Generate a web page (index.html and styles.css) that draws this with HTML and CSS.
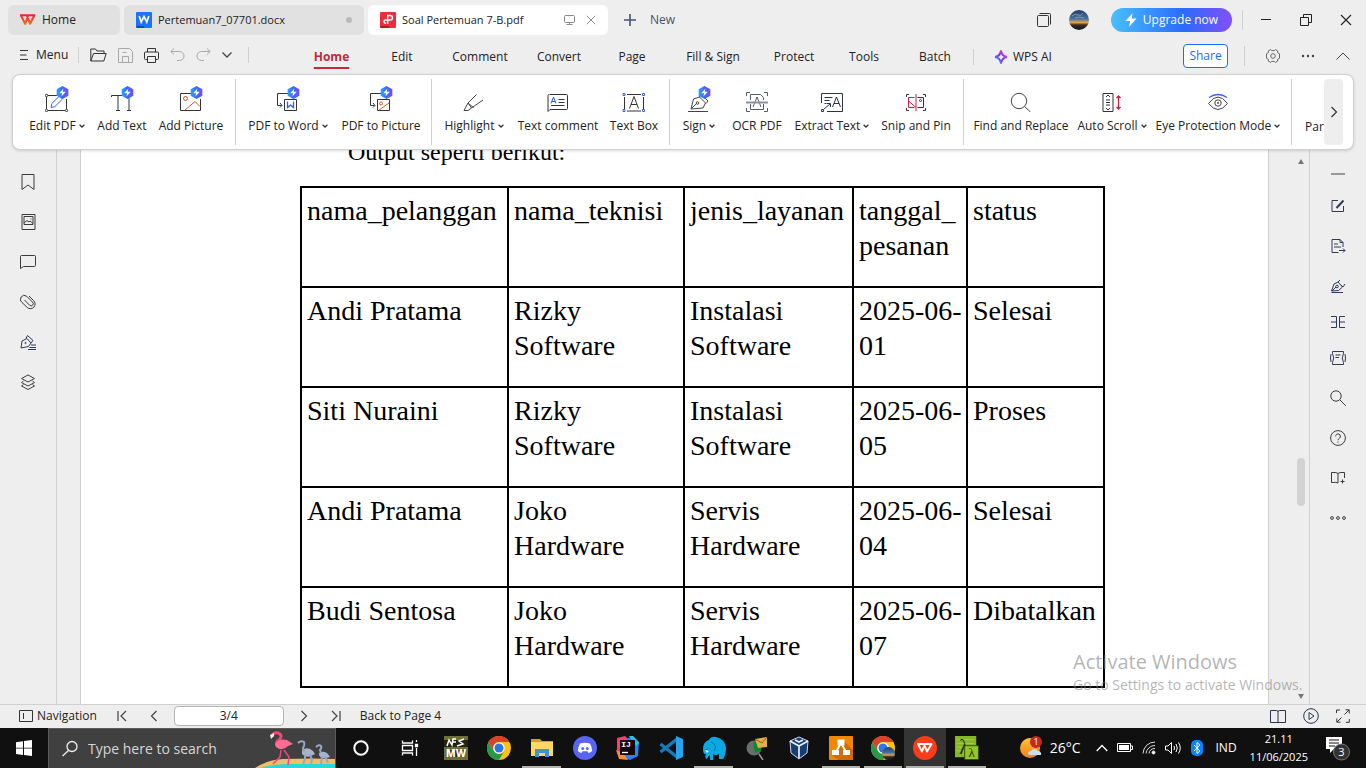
FILE: index.html
```html
<!DOCTYPE html>
<html lang="en">
<head>
<meta charset="utf-8">
<title>Soal Pertemuan 7-B.pdf</title>
<link rel="stylesheet" href="styles.css">
</head>
<body>
<svg class="defs" aria-hidden="true">
  <defs>
    <linearGradient id="gBolt"><stop offset="0" stop-color="#2aa4ff"/><stop offset=".5" stop-color="#3a68ff"/><stop offset="1" stop-color="#7a4bf5"/></linearGradient>
    <linearGradient id="gWps" x2="0" y2="1"><stop offset="0" stop-color="#f0203a"/><stop offset="1" stop-color="#ff6a10"/></linearGradient>
    <linearGradient id="gAi" x1="1" y1="0" x2="0" y2="1"><stop offset="0" stop-color="#ff5ac0"/><stop offset=".5" stop-color="#7a2cff"/><stop offset="1" stop-color="#32b4ff"/></linearGradient>
    <linearGradient id="gSky" x2="0" y2="1"><stop offset="0" stop-color="#1c3f74"/><stop offset=".45" stop-color="#4e7199"/><stop offset=".62" stop-color="#e2a650"/><stop offset=".75" stop-color="#3a2a22"/><stop offset="1" stop-color="#0e1824"/></linearGradient>
    <linearGradient id="gSun" x2="0" y2="1"><stop offset="0" stop-color="#ffc23a"/><stop offset="1" stop-color="#f57f17"/></linearGradient>
  </defs>
  <symbol id="bolt" viewBox="0 0 12 12"><g stroke="none"><path d="M6 0l5.400 3v6L6 12 .6 9V3z" fill="url(#gBolt)"/><path d="M6.800 2.200L3 6.600h2.600L5 9.800l4-4.600H6.200z" fill="#fff"/></g></symbol>
  <symbol id="down" viewBox="0 0 6 4"><path d="M.6.8L3 3 5.400.8" fill="none" stroke="#333" stroke-width="1.300"/></symbol>
  <symbol id="chrome" viewBox="0 0 24 24"><circle cx="12" cy="12" r="12" fill="#fbc116"/><path d="M1.600 6A12 12 0 0122.400 6H12a6 6 0 00-5.200 9z" fill="#e33b2e"/><path d="M1.600 6A12 12 0 0012 24l5.200-9A6 6 0 016.800 15z" fill="#269a48"/><circle cx="12" cy="12" r="5.700" fill="#fff"/><circle cx="12" cy="12" r="4.500" fill="#2a78e8"/></symbol>
</svg>

<header class="titlebar">
  <nav class="doc-tabs" aria-label="Documents">
    <button class="doc-tab tab-home"><svg width="16" height="12" viewBox="0 0 16 12"><path d="M.8 1.200h6l3.300 8.600 4.300-8.600H8.200L5.200 10z" fill="none" stroke="url(#gWps)" stroke-width="2" stroke-linejoin="round"/></svg><span>Home</span></button>
    <button class="doc-tab tab-doc"><svg width="16" height="16" viewBox="0 0 16 16"><rect width="16" height="16" rx="1" fill="#1c74f4"/><path d="M0 14h8v2H1z" fill="#0a4cc0"/><path d="M3.200 4l2 6L8 4.500 10.800 10l2-6" fill="none" stroke="#fff" stroke-width="1.700"/></svg><span>Pertemuan7_07701.docx</span><i class="dirty"></i></button>
    <button class="doc-tab tab-pdf active"><svg width="16" height="16" viewBox="0 0 16 16"><rect width="16" height="16" rx="1" fill="#ec2d3d"/><path d="M0 14h9v2H1z" fill="#b51628"/><path d="M7.700 12V3.500h2.500a2.200 2.200 0 010 4.500H5.600a1.600 1.600 0 100 3.200h.6" fill="none" stroke="#fff" stroke-width="1.500"/></svg><span>Soal Pertemuan 7-B.pdf</span>
      <svg class="push" width="12" height="12" viewBox="0 0 12 12" fill="none" stroke="#8a8a8a"><rect x=".5" y="1.500" width="10" height="7" rx="1"/><path d="M5.500 8.500v2M2.500 10.500h6"/></svg>
      <svg width="10" height="10" viewBox="0 0 10 10"><path d="M.8.8l8.400 8.400M9.200.8L.8 9.200" stroke="#8a8a8a"/></svg></button>
  </nav>
  <button class="new-tab"><svg width="12" height="12" viewBox="0 0 12 12"><path d="M6 0v12M0 6h12" stroke="#44546f" stroke-width="1.600"/></svg>New</button>
  <div class="window-tools">
    <button aria-label="Windows"><svg width="14" height="14" viewBox="0 0 14 14" fill="none" stroke="#333"><rect x=".5" y="2.500" width="11" height="11" rx="1"/><path d="M2.500.5h10a1 1 0 011 1v10"/></svg></button>
    <button aria-label="Account"><svg width="20" height="20" viewBox="0 0 20 20"><circle cx="10" cy="10" r="10" fill="url(#gSky)"/><path d="M3 6q3-3 6-1t5-2M6 8q4-2 9 0" stroke="#c8b090" opacity=".6" fill="none"/></svg></button>
    <button class="upgrade"><svg width="12" height="14" viewBox="0 0 12 14"><path d="M7.500 0L.5 8h4.700L4 14l7.500-8.500H6.700z" fill="#fff"/></svg>Upgrade now</button>
    <span class="vline"></span>
    <button class="win" aria-label="Minimize"><svg width="12" height="12" viewBox="0 0 12 12"><path d="M1 5.500h10" stroke="#222"/></svg></button>
    <button class="win" aria-label="Restore"><svg width="12" height="12" viewBox="0 0 12 12" fill="none" stroke="#222"><path d="M.5 3.500h8v8h-8zM3.500 3.500v-3h8v8h-3"/></svg></button>
    <button class="win" aria-label="Close"><svg width="12" height="12" viewBox="0 0 12 12"><path d="M1 1l10 10M11 1L1 11" stroke="#222" stroke-width="1.100"/></svg></button>
  </div>
</header>

<div class="menubar">
  <div class="quick">
    <button class="menu-btn"><svg width="10" height="12" viewBox="0 0 10 12"><path d="M0 1.500h8M0 6h6.500M0 10.500h8" stroke="#333" stroke-width="1.100"/></svg>Menu</button>
    <span class="vline short"></span>
    <button aria-label="Open"><svg width="17" height="14" viewBox="0 0 17 14" fill="none" stroke="#333"><path d="M.8 13V1h4.700l1.500 2h7v2.500M.8 13l2.700-7.500h12.700L13.800 13z"/></svg></button>
    <button aria-label="Save"><svg width="15" height="15" viewBox="0 0 15 15" fill="none" stroke="#a8a8a8"><path d="M.5.5h11l3 3v11H.5zM4.500 14V8.500h6V14M4.500 4.500h4"/></svg></button>
    <button aria-label="Print"><svg width="15" height="15" viewBox="0 0 15 15" fill="none" stroke="#333"><path d="M3.500 4V.5h8V4M3.500 11.500h-2a1 1 0 01-1-1V5a1 1 0 011-1h12a1 1 0 011 1v5.500a1 1 0 01-1 1h-2M3.500 8.500h8v6h-8z"/></svg></button>
    <button aria-label="Undo"><svg width="15" height="14" viewBox="0 0 15 14" fill="none" stroke="#a8a8a8"><path d="M4 .5L.8 3.500 4 6.500M1 3.500h8.500a4.500 4.500 0 010 9H7"/></svg></button>
    <button aria-label="Redo"><svg width="15" height="14" viewBox="0 0 15 14" fill="none" stroke="#a8a8a8"><path d="M11 .5l3.200 3L11 6.500M14 3.500H5.500a4.500 4.500 0 000 9H8"/></svg></button>
    <button aria-label="More commands"><svg width="10" height="6" viewBox="0 0 10 6"><path d="M.5.5L5 5 9.500.5" fill="none" stroke="#444" stroke-width="1.300"/></svg></button>
    <span class="vline short"></span>
  </div>
  <nav class="ribbon-tabs" aria-label="Ribbon">
    <button class="active">Home</button><button>Edit</button><button>Comment</button><button>Convert</button><button>Page</button><button>Fill &amp; Sign</button><button>Protect</button><button>Tools</button><button>Batch</button>
  </nav>
  <span class="vline short"></span>
  <button class="ai"><svg width="14" height="16" viewBox="0 0 14 16"><path d="M7 1.500Q7.800 7.200 13 8 7.800 8.800 7 14.500 6.200 8.800 1 8 6.200 7.200 7 1.500z" fill="none" stroke="url(#gAi)" stroke-width="1.900"/></svg>WPS AI</button>
  <div class="menu-right">
    <button class="share">Share</button>
    <span class="vline"></span>
    <button aria-label="Settings"><svg width="14" height="14" viewBox="0 0 14 14" fill="none" stroke="#6a6a6a"><path d="M4.500.6L5.800 1.600h2.400L9.500.6l2.200 1.300-.1 1.800 1.900 1v4.600l-1.900 1 .1 1.800-2.200 1.300-1.300-1H5.800l-1.300 1-2.200-1.300.1-1.800-1.900-1V4.700l1.900-1-.1-1.800z"/><circle cx="7" cy="7" r="2.300"/></svg></button>
    <button aria-label="More"><svg width="14" height="4" viewBox="0 0 14 4" fill="#444"><circle cx="2" cy="2" r="1.200"/><circle cx="7" cy="2" r="1.200"/><circle cx="12" cy="2" r="1.200"/></svg></button>
    <button aria-label="Collapse ribbon"><svg width="14" height="8" viewBox="0 0 14 8"><path d="M.5 7.500L7 1l6.500 6.500" fill="none" stroke="#444"/></svg></button>
  </div>
</div>

<section class="ribbon" aria-label="Home tools">
  <button class="tool"><svg class="ico" viewBox="0 0 24 26" fill="none" stroke="#333"><path d="M3 9.500h10M1.500 11v12M21.500 13v10M3 24.500h17"/><circle cx="1.500" cy="9.500" r="1.200"/><circle cx="1.500" cy="24.500" r="1.200"/><circle cx="21.500" cy="24.500" r="1.200"/><path d="M6 21.500l.8-4L14.500 10l3 3-7.700 7.700z" stroke="#3b62e8"/><use href="#bolt" x="11" y="0" width="13" height="13"/></svg><span>Edit PDF <svg class="dn"><use href="#down"/></svg></span></button>
  <button class="tool"><svg class="ico" viewBox="0 0 24 26" fill="none" stroke="#2a3550"><path d="M1.500 11V9.500h13V11M8 9.500v15M6 24.500h4M19 11v13.500M17 24.500h4"/><use href="#bolt" x="11" y="0" width="13" height="13"/></svg><span>Add Text</span></button>
  <button class="tool"><svg class="ico" viewBox="0 0 24 26" fill="none" stroke="#333"><path d="M21.500 13v11.500h-20v-17h11"/><circle cx="6.500" cy="12.500" r="2" stroke="#cc5b20"/><path d="M6 24l10-8.500 5 5" stroke="#cc5b20"/><use href="#bolt" x="11" y="0" width="13" height="13"/></svg><span>Add Picture</span></button>
  <i class="sep"></i>
  <button class="tool"><svg class="ico" viewBox="0 0 24 26" fill="none" stroke="#333"><path d="M12 7.500H1.500v12h4M4 17l2 2.500-2 2M8.500 13.500h12v11h-12z"/><path d="M11.500 15.500v6l3-2.500 3 2.500v-6" stroke="#2c5fe0" stroke-width="1.300"/><use href="#bolt" x="11" y="0" width="13" height="13"/></svg><span>PDF to Word <svg class="dn"><use href="#down"/></svg></span></button>
  <button class="tool"><svg class="ico" viewBox="0 0 24 26" fill="none" stroke="#333"><path d="M12 7.500H1.500v12h4M4 17l2 2.500-2 2M8.500 13.500h12v11h-12z"/><path d="M10 24l10-7" stroke="#cc5b20"/><circle cx="12" cy="17.500" r="1.500" stroke="#cc5b20"/><use href="#bolt" x="11" y="0" width="13" height="13"/></svg><span>PDF to Picture</span></button>
  <i class="sep"></i>
  <button class="tool"><svg class="ico" viewBox="0 0 24 26" fill="none" stroke="#444"><path d="M14.500 8.500L6 17l3.500 5 11.500-8M6 17l-4 7.500h4l3.500-2.500M6.500 17.500l5 4"/></svg><span>Highlight <svg class="dn"><use href="#down"/></svg></span></button>
  <button class="tool"><svg class="ico" viewBox="0 0 24 26" fill="none" stroke="#333"><path d="M3.500 8.500h17a1 1 0 011 1v13a1 1 0 01-1 1H4l-2 2v-16a1 1 0 011-1M12.500 13.500h6M12.500 16.500h6M5 19.500h13.500"/><path d="M5 17.500l2.500-6.500 2.500 6.500M6 15.500h3" stroke="#2c5fe0"/></svg><span>Text comment</span></button>
  <button class="tool"><svg class="ico" viewBox="0 0 24 26" fill="none" stroke="#333"><path d="M5 8.500h14M2.500 11v12M21.500 11v12M5 25h14M7.500 22.500l4.500-12 4.500 12M9 18.500h6"/><path d="M1 7.500h2v2H1zM20.500 7.500h2v2h-2zM1 23.500h2v2H1zM20.500 23.500h2v2h-2z" stroke="#3b62e8"/></svg><span>Text Box</span></button>
  <i class="sep"></i>
  <button class="tool"><svg class="ico" viewBox="0 0 24 26" fill="none" stroke="#444"><path d="M1 25.500h20M4 23l2.500-10 6-2 6 6-2.500 5zM12 11l3-2 6 6-2 2.500M4.500 22.500l5-5"/><circle cx="10.500" cy="17" r="1.300"/><use href="#bolt" x="11" y="0" width="13" height="13"/></svg><span>Sign <svg class="dn"><use href="#down"/></svg></span></button>
  <button class="tool"><svg class="ico" viewBox="0 0 24 26" fill="none" stroke="#525b70"><path d="M1.500 10V6.500H5M19 6.500h3.500V10M1.500 22v3.500H5M19 25.500h3.500V22M5.500 14V8.500h10l3 3V14M5.500 18v5.500h13V18M8 21l4-10 4 10"/><path d="M1 16.500h22" stroke-width="2" stroke="#8b929e"/></svg><span>OCR PDF</span></button>
  <button class="tool"><svg class="ico" viewBox="0 0 24 26" fill="none" stroke="#29324a"><path d="M1.500 17V7.500h21v18H7M4.500 11.500h8M4.500 14.500h5M4.500 17.500h2M12.500 21l4-10 4 10M14 17.500h5M1.500 23.500h2v2h-2zM4 23l6-5M7 17.500h3.500V21"/></svg><span>Extract Text <svg class="dn"><use href="#down"/></svg></span></button>
  <button class="tool"><svg class="ico" viewBox="0 0 24 26" fill="none" stroke="#333"><path d="M2.500 11V8.500H5M19 8.500h2.500V11M2.500 22v2.500H5M19 24.500h2.500V22M13.500 11.500h6v10h-6"/><circle cx="16.500" cy="14.500" r="1"/><path d="M12 8v17M10.500 11.500h-6v10h6M4.500 15l7 6" stroke="#c51f48"/></svg><span>Snip and Pin</span></button>
  <i class="sep"></i>
  <button class="tool"><svg class="ico" viewBox="0 0 24 26" fill="none" stroke="#444"><circle cx="10" cy="15" r="7.700"/><path d="M15.500 20.500l6 5.500"/></svg><span>Find and Replace</span></button>
  <button class="tool"><svg class="ico" viewBox="0 0 24 26" fill="none" stroke="#333"><path d="M3 7.500h10v18H3zM6 11l2-2 2 2M6 22l2 2 2-2M6 14h4M6 16.500h4M6 19h4"/><path d="M18.500 10v13M16.500 12l2-2 2 2M16.500 21l2 2 2-2" stroke="#c51f48" stroke-width="1.300"/></svg><span>Auto Scroll <svg class="dn"><use href="#down"/></svg></span></button>
  <button class="tool"><svg class="ico" viewBox="0 0 24 26" fill="none" stroke="#444"><path d="M2.500 17.500q9.500-13 19 0-9.500 12-19 0z"/><circle cx="12" cy="17" r="3.200"/><circle cx="12" cy="17" r=".6"/><path d="M3 11.500q9-6 18 0" stroke="#3b62e8" stroke-width="1.300"/></svg><span>Eye Protection Mode <svg class="dn"><use href="#down"/></svg></span></button>
  <i class="sep"></i>
  <button class="tool cut"><span>Par</span></button>
  <button class="scroll-next" aria-label="Scroll right"><svg width="8" height="12" viewBox="0 0 8 12"><path d="M1.500 1l5 5-5 5" fill="none" stroke="#333" stroke-width="1.200"/></svg></button>
</section>

<div class="workspace">
  <aside class="rail left-rail">
    <button aria-label="Bookmarks"><svg viewBox="0 0 16 16"><path d="M2 .5h12v15l-6-4.500-6 4.500z"/></svg></button>
    <button aria-label="Thumbnails"><svg viewBox="0 0 16 16"><path d="M2 .5h13v15H2zM4 2.500h9v8H4zM4 9l3-2.500 2 1.500 1-1 3 2.500M10.500 5h1"/></svg></button>
    <button aria-label="Comments"><svg viewBox="0 0 16 16"><path d="M1.500 1.500h13a1 1 0 011 1v9a1 1 0 01-1 1H3.500l-3 2v-12a1 1 0 011-1z"/></svg></button>
    <button aria-label="Attachments"><svg viewBox="0 0 16 16"><path d="M9 2l4.500 4.500a4.400 4.400 0 01-6.200 7L2 8.500a3.200 3.200 0 014.600-6.300l6 6a2 2 0 01-3 3L4.500 6"/></svg></button>
    <button aria-label="Signatures"><svg viewBox="0 0 16 16" class="navy"><path d="M1 14L2 7l5-2.500L11 9l-2.500 3.500zM6 4.500l1.500-3L13 6.500 11 9M11 11h5M9.500 13.500H16M8 15.500h8"/><circle cx="5.500" cy="9" r=".6"/></svg></button>
    <button aria-label="Layers"><svg viewBox="0 0 16 16"><path d="M8 1l6.500 3.500L8 8 1.500 4.500zM3.500 7l-2 1.500L8 12l6.500-3.500-2-1.500M3.500 10.500l-2 1.500L8 15.500l6.500-3.500-2-1.500"/></svg></button>
  </aside>

  <main class="canvas">
    <article class="page">
      <p class="lead">Output seperti berikut:</p>
      <table class="result">
        <colgroup><col class="c1"><col class="c2"><col class="c3"><col class="c4"><col class="c5"></colgroup>
        <thead><tr><th scope="col">nama_pelanggan</th><th scope="col">nama_teknisi</th><th scope="col">jenis_layanan</th><th scope="col">tanggal_<wbr>pesanan</th><th scope="col">status</th></tr></thead>
        <tbody>
          <tr><td>Andi Pratama</td><td>Rizky Software</td><td>Instalasi Software</td><td>2025-06-<wbr>01</td><td>Selesai</td></tr>
          <tr><td>Siti Nuraini</td><td>Rizky Software</td><td>Instalasi Software</td><td>2025-06-<wbr>05</td><td>Proses</td></tr>
          <tr><td>Andi Pratama</td><td>Joko Hardware</td><td>Servis Hardware</td><td>2025-06-<wbr>04</td><td>Selesai</td></tr>
          <tr><td>Budi Sentosa</td><td>Joko Hardware</td><td>Servis Hardware</td><td>2025-06-<wbr>07</td><td>Dibatalkan</td></tr>
        </tbody>
      </table>
    </article>
    <div class="scrollbar"><i class="arrow up"></i><i class="thumb"></i><i class="arrow dwn"></i></div>
  </main>

  <aside class="rail right-rail">
    <button aria-label="Collapse"><svg viewBox="0 0 16 16"><path d="M1 8h14" stroke="#8a8a8a" stroke-width="1.700"/></svg></button>
    <button aria-label="Edit"><svg viewBox="0 0 16 16" class="navy"><path d="M8 2.500H2v11h11.500V8"/><path d="M6.500 10l7-7.500" stroke-width="2"/></svg></button>
    <button aria-label="Convert"><svg viewBox="0 0 16 16" class="navy"><path d="M8.500 14.500H2v-13h8l3 3V9M10 1.500v3h3M4 6h4M4 9h7M9 12.500h6M13 10.500l2 2-2 2"/></svg></button>
    <button aria-label="Sign"><svg viewBox="0 0 16 16" class="navy"><path d="M1.500 13L4 6l4-2 4.500 5-4 3.500zM8 4l2-2M11 7l2 2 2-3M1.500 14.500H13M2 13l4-4"/><circle cx="7" cy="8.500" r="1.300"/></svg></button>
    <button aria-label="Compare"><svg viewBox="0 0 16 16" class="navy"><path d="M1 2.500h5.500v11H1M1 8h5M15 2.500H9.500v11H15M10 8h5"/></svg></button>
    <button aria-label="Compress"><svg viewBox="0 0 16 16" class="navy"><path d="M2.500 1.500h11v2q-2.500 4.500 0 9v2h-11v-2q2.500-4.500 0-9zM1 4q-1 4 0 8M15 4q1 4 0 8M5.500 5h5M5.500 7.500H9"/></svg></button>
    <button aria-label="Search"><svg viewBox="0 0 16 16"><circle cx="6" cy="6" r="5.200"/><path d="M9.800 9.800l6 6"/></svg></button>
    <button aria-label="Help"><svg viewBox="0 0 16 16"><circle cx="8" cy="8" r="7.400"/><path d="M5.600 6.300a2.400 2.400 0 114 1.800Q8 9 8 10.200M8 11.500v1.200"/></svg></button>
    <button aria-label="Dictionary"><svg viewBox="0 0 16 16"><path d="M8 13q-1.500-1-6.500-.5v-10Q7 2 8 3.500 9 2 14.500 2.500V8M8 3.500V13M10.500 11.500h4M12.500 9.500v4"/></svg></button>
    <button aria-label="More"><svg viewBox="0 0 16 16"><circle cx="2" cy="8" r="1.400"/><circle cx="8" cy="8" r="1.400"/><circle cx="14" cy="8" r="1.400"/></svg></button>
  </aside>
</div>

<footer class="status">
  <button class="nav-btn"><svg width="14" height="12" viewBox="0 0 14 12" fill="none" stroke="#333"><path d="M.5.5h13v11H.5zM4.500 3v6"/></svg>Navigation</button>
  <div class="pager">
    <button aria-label="First page"><svg width="10" height="12" viewBox="0 0 10 12"><path d="M1 1v10M9 1L4 6l5 5"/></svg></button>
    <button aria-label="Previous page"><svg width="10" height="12" viewBox="0 0 10 12"><path d="M7.500 1l-5 5 5 5"/></svg></button>
    <input type="text" value="3/4" aria-label="Page">
    <button aria-label="Next page"><svg width="10" height="12" viewBox="0 0 10 12"><path d="M2.500 1l5 5-5 5"/></svg></button>
    <button aria-label="Last page"><svg width="10" height="12" viewBox="0 0 10 12"><path d="M9 1v10M1 1l5 5-5 5"/></svg></button>
  </div>
  <a class="back" href="#page4">Back to Page 4</a>
  <div class="view">
    <button aria-label="Reading view"><svg width="16" height="16" viewBox="0 0 16 16" fill="none" stroke="#29324a"><path d="M8 14.500H.5v-12h6Q8 2.500 8 4q0-1.500 1.500-1.500h6v12H8zM8 4v10"/></svg></button>
    <button aria-label="Play"><svg width="16" height="16" viewBox="0 0 16 16" fill="none" stroke="#29324a"><circle cx="8" cy="8" r="7.300"/><path d="M6 4.500L11 8l-5 3.500z"/></svg></button>
    <button aria-label="Full screen"><svg width="14" height="14" viewBox="0 0 14 14" fill="none" stroke="#333"><path d="M.5 4V1H4M9.500.8h3.700v3.700M.8 9.500v3.700h3.700M10 13.300h3.300V10M8.500 5.500l4.500-4.500M1 13l4.500-4.500"/></svg></button>
  </div>
</footer>

<div class="taskbar">
  <button class="start" aria-label="Start"><svg width="16" height="16" viewBox="0 0 16 16" fill="#fff"><path d="M0 2.200L7 1.200v6.500H0zM8 1.100L16 0v7.700H8zM0 8.500h7V15l-7-1zM8 8.500h8V16l-8-1.100z"/></svg></button>
  <label class="search">
    <svg width="18" height="18" viewBox="0 0 18 18" fill="none" stroke="#eee" stroke-width="1.300"><circle cx="11" cy="6.500" r="5"/><path d="M7.500 10.500L1.500 16"/></svg>
    <input type="text" placeholder="Type here to search" aria-label="Type here to search">
    <svg class="birds" viewBox="0 0 80 38"><path d="M0 38Q12 30 28 29q30-1 52 0v9z" fill="#f0bd6a"/><path d="M5 38q12-4 30-4h45v4z" fill="#2ad8dc"/><g fill="none" stroke="#f0487c"><path d="M17 6q2-4 6-3 5 2 2 6-5 3-3 7" stroke-width="3"/><path d="M26 20l-1 7-7 7M29 20l5 7-1 8" stroke-width="1.500"/></g><path d="M20 14q4-6 12-4l6 4-5 2q-6 6-12 1z" fill="#ff6d91"/><path d="M15 5l4-2v3l-3 3z" fill="#eee"/><g fill="#a9b3cc"><path d="M47 20q6-4 11 1l2 3-4 2q-6 2-9-2zM64 23q5-3 9 1l2 3-4 1q-5 1-7-3z"/></g><g fill="none" stroke="#9aa5c2" stroke-width="2"><path d="M43 13q3-3 6-1 1 3-1 6l1 4M50 24v5l-2 5M54 24l3 5-1 5M61 17q3-3 5-1 1 2-1 4l1 3M67 26l-1 8M70 26l3 7"/></g></svg>
  </label>
  <div class="task-sys">
    <button aria-label="Cortana"><svg width="18" height="18" viewBox="0 0 18 18"><circle cx="9" cy="9" r="6.700" fill="none" stroke="#fff" stroke-width="2"/></svg></button>
    <button aria-label="Task view"><svg width="18" height="18" viewBox="0 0 18 18" fill="none" stroke="#fff" stroke-width="1.300"><path d="M1.500 1.500V4h10V1.500M1.500 6.500h10v5h-10zM1.500 16.500V14h10v2.500M15.500 1v2M15.500 9v8"/><path d="M14.500 5.500h2v2h-2z" fill="#fff"/></svg></button>
  </div>
  <div class="apps">
    <button aria-label="NFS MW"><svg viewBox="0 0 24 24"><path fill="#6d7037" d="M0 0h24v24H0z"/><path d="M0 4h24v7H0zM3 14h18v7H3z" fill="#22240f"/><path d="M3 10l2-6 3 5 1-6h3M9 6h3M20 3l-5 2 4 3-6 2" stroke="#fff" stroke-width="1.500" fill="none"/><text x="12" y="21" class="t-mw">MW</text></svg></button>
    <button aria-label="Chrome"><svg><use href="#chrome"/></svg></button>
    <button class="open" aria-label="File Explorer"><svg viewBox="0 0 24 24"><path d="M1 3h9l2 2h11v15H1z" fill="#dc9a20"/><path d="M1 6h22v14H1z" fill="#ffd764"/><path d="M5 21v-8h14v8h-4v-4H9v4z" fill="#3f93d8"/></svg></button>
    <button aria-label="Discord"><svg viewBox="0 0 24 24"><circle cx="12" cy="12" r="12" fill="#5865f2"/><path d="M7 7.500q5-1.500 10 0 2 3.500 2.200 7.500-1.700 1.600-3.700 2l-1-1.700h-5L8.500 17q-2-.4-3.700-2Q5 11 7 7.500z" fill="#fff"/><ellipse cx="9.700" cy="12.500" rx="1.400" ry="1.600" fill="#5865f2"/><ellipse cx="14.300" cy="12.500" rx="1.400" ry="1.600" fill="#5865f2"/></svg></button>
    <button aria-label="IntelliJ IDEA"><svg viewBox="0 0 24 24"><path d="M1 2l8-2 4 4-1 17-11-4z" fill="#ff3d6a"/><path d="M10 3l7-3 6 6-1 14-8 4-9-3z" fill="#1f86ff"/><path d="M0 14l8 4 4 6-9-1z" fill="#ff8a35"/><path d="M13 0h4l6 7-3 3z" fill="#20c8e8"/><path fill="#160610" d="M4 4h15v15H4z"/><text x="10" y="11" class="t-ij">IJ</text><path d="M6 16.500h6" stroke="#fff" stroke-width="1.300"/></svg></button>
    <button aria-label="VS Code"><svg viewBox="0 0 24 24" fill="none"><path d="M1.500 8L18 21M1.500 16L18 3" stroke="#1479bd" stroke-width="3.400"/><path d="M17 0l7 3v18l-7 3z" fill="#25a3ef"/></svg></button>
    <button class="open" aria-label="MAMP"><svg viewBox="0 0 24 24"><path d="M1 13Q1 6 7 4q2-4 7-3 9 2 10 11 0 7-3 11h-4v-5q-3 2-6 0v6H8v-5q-2 1-3 4-3-1-1-5-3 1-3-5z" fill="#0aa9e2"/><path d="M9 6q7 3 3 9M3 14l3-1" stroke="#0a70a5" fill="none"/><path d="M3 14l4 1-2 2z" fill="#fff"/></svg></button>
    <button aria-label="Mail search"><svg viewBox="0 0 24 24"><circle cx="9" cy="12" r="7.500" fill="#696d6b"/><path d="M8 6l8-1v10l-6 2z" fill="#118530"/><path d="M10 3l12-2v10l-9 1z" fill="#e1b044"/><path d="M10 3l7 4 5-6" stroke="#916319" fill="none"/><path d="M14 18l4 6" stroke="#999" stroke-width="1.500"/></svg></button>
  </div>
  <div class="apps narrow">
    <button aria-label="VirtualBox"><svg viewBox="0 0 24 24"><path d="M12 1l9 4-1 12-8 6-8-6L3 5z" fill="#173e70" stroke="#c8d8ee"/><path d="M3 5l9 5 9-5M12 10v12M8 4l4 2 4-2" stroke="#e7effa" stroke-width="1.700" fill="none"/></svg></button>
    <button class="open" aria-label="draw.io"><svg viewBox="0 0 24 24"><rect width="24" height="24" rx="1" fill="#f08705"/><path d="M15 5l9 9v10H9l-6-5z" fill="#d66c00"/><path d="M12 7L7 16M12 7l5 9" stroke="#fff" stroke-width="2"/><path d="M8.500 3.500h7v6h-7zM3 14h7v5H3zM14 14h7v5h-7z" fill="#fff"/></svg></button>
    <button class="open" aria-label="Chrome profile"><svg viewBox="0 0 24 24"><use href="#chrome"/><circle cx="17.500" cy="17.500" r="6.500" fill="url(#gSky)"/></svg></button>
    <button class="open current" aria-label="WPS Office"><svg viewBox="0 0 24 24"><circle cx="12" cy="12" r="12" fill="#fb3c1c"/><path d="M5 8h6l3 7.500L18.500 8H12l-3 7.500z" fill="none" stroke="#fff" stroke-width="2" stroke-linejoin="round"/></svg></button>
    <button class="open" aria-label="Lambda"><svg viewBox="0 0 26 26"><path fill="#85b827" d="M0 0h23v23H0z"/><path d="M2 4h19M2 8h19M2 12h8M2 16h8" stroke="#a7d149"/><text x="10" y="19" class="t-la big">λ</text><path fill="#93c627" stroke="#34470f" d="M10.500 10.500h15v15h-15z"/><text x="18" y="23" class="t-la">λ</text></svg></button>
  </div>
  <div class="tray">
    <button class="weather"><svg width="24" height="24" viewBox="0 0 24 24"><circle cx="10" cy="12" r="10" fill="url(#gSun)"/><path d="M8 18a3 3 0 013-3q3-4 7 0a3 3 0 013 4H10z" fill="#c9ddf5"/><circle cx="16" cy="6" r="6" fill="#c6281f"/><text x="16" y="9" class="t-badge">1</text></svg>26°C</button>
    <button aria-label="Hidden icons"><svg width="12" height="8" viewBox="0 0 12 8"><path d="M.7 7L6 1.500 11.300 7" fill="none" stroke="#fff" stroke-width="1.300"/></svg></button>
    <button aria-label="Battery"><svg width="16" height="10" viewBox="0 0 16 10"><path d="M.5.5h13v8H.5zM14 3h1.500v3.500H14" fill="none" stroke="#fff"/><path fill="#fff" d="M2 2h10v5H2z"/></svg></button>
    <button aria-label="Network"><svg width="14" height="14" viewBox="0 0 14 14" fill="none" stroke="#ddd"><path d="M1 12.500A12 12 0 0113 1M4 12.500A9 9 0 0113 4.500M7 12.500A6 6 0 0113 7.500"/><circle cx="11.500" cy="11.500" r="1.500" fill="#fff"/></svg></button>
    <button aria-label="Volume"><svg width="17" height="14" viewBox="0 0 17 14" fill="none" stroke="#fff"><path d="M.5 5h2.500l3.500-3.500v11L3 9H.5zM9 5q1 2 0 4M11 3q2.500 4 0 8M13.500 1.500q3.500 5.500 0 11"/></svg></button>
    <button aria-label="Bluetooth"><svg width="12" height="16" viewBox="0 0 12 16"><rect width="12" height="16" rx="5" fill="#0a84ff"/><path d="M3 5l6 6-3 2.500v-11L9 5l-6 6" fill="none" stroke="#fff"/></svg></button>
    <button class="lang">IND</button>
    <button class="clock"><span>21.11</span><span>11/06/2025</span></button>
    <button aria-label="Notifications"><svg width="26" height="26" viewBox="0 0 26 26"><path d="M1 2h16v12H9l-4 4v-4H1z" fill="#fff"/><path d="M4 5h10M4 8h10M4 11h6" stroke="#111" stroke-width="1.200"/><circle cx="16.500" cy="17" r="8" fill="#333" stroke="#777"/><text x="16.500" y="21" class="t-badge three">3</text></svg></button>
  </div>
</div>

<div class="watermark"><strong>Activate Windows</strong><span>Go to Settings to activate Windows.</span></div>
</body>
</html>
```

FILE: styles.css
```css
* { box-sizing: border-box; }

body {
  margin: 0;
  height: 100vh;
  display: flex;
  flex-direction: column;
  overflow: hidden;
  background: #eeeeee;
  color: #222;
  font: 12px/16px "Open Sans", "Noto Sans", sans-serif;
}

button {
  display: flex;
  align-items: center;
  justify-content: center;
  padding: 0;
  border: 0;
  background: none;
  color: inherit;
  font: inherit;
  white-space: nowrap;
}

svg { flex: none; }
.defs { position: absolute; width: 0; height: 0; }
.vline { width: 1px; height: 20px; background: #cfcfcf; }
.vline.short { height: 16px; }

/* Title bar */
.titlebar { display: flex; align-items: center; height: 40px; padding: 0 8px; flex: none; }
.doc-tabs { display: flex; gap: 4px; }
.doc-tab { height: 30px; padding: 0 12px; gap: 6px; justify-content: flex-start; border-radius: 6px; background: #e1e1e1; }
.doc-tab.active { background: #fff; }
.tab-home { width: 112px; }
.tab-doc, .tab-pdf { width: 240px; font-size: 11px; }
.dirty { width: 6px; height: 6px; margin-left: auto; border-radius: 50%; background: #bababa; }
.push { margin-left: auto; margin-right: 4px; }
.new-tab { margin-left: 16px; gap: 14px; color: #44546f; }
.window-tools { display: flex; align-items: center; margin-left: auto; padding-right: 6px; gap: 18px; }
.upgrade { width: 121px; height: 24px; margin-left: 4px; gap: 6px; border-radius: 12px; background: linear-gradient(90deg, #48bfff, #2a6bff 60%, #824ff8); color: #fff; }
.window-tools .vline { margin-left: -8px; }
.win { width: 12px; margin-left: 10px; }
.window-tools .vline + .win { margin-left: -1px; }

/* Menu bar */
.menubar { display: flex; align-items: center; height: 34px; flex: none; }
.quick { display: flex; align-items: center; width: 296px; padding: 0 0 4px 20px; gap: 11px; }
.menu-btn { gap: 6px; }
.menu-btn + .vline { margin-left: -1px; }
.quick > .vline:last-child { margin-left: 5px; }
.ribbon-tabs { display: grid; grid-template-columns: 71px 70px 86px 72px 74px 88px 74px 66px 76px; }
.ribbon-tabs button { height: 26px; }
.ribbon-tabs .active { color: #c3283c; font-weight: 700; text-decoration: underline; text-decoration-thickness: 2px; text-underline-offset: 6px; }
.ai { margin-left: 20px; gap: 5px; }
.menu-right { display: flex; align-items: center; gap: 21px; margin-left: auto; padding: 0 16px 2px 0; }
.share { width: 45px; height: 24px; border: 1px solid #1a6dff; border-radius: 4px; background: #fff; color: #1a6dff; }
.menu-right .vline { margin-left: -5px; }

/* Ribbon */
.ribbon {
  position: relative;
  z-index: 1;
  display: grid;
  grid-template-columns: 70px 60px 78px 10px 96px 90px 10px 76px 92px 60px 10px 50px 66px 84px 84px 10px 106px 76px 136px 10px minmax(26px, 1fr) 19px;
  align-items: center;
  height: 76px;
  flex: none;
  margin: 0 12px;
  padding: 0 10px 0 9px;
  border: 1px solid #d0d0d0;
  border-radius: 8px;
  background: #fff;
  box-shadow: 0 1px 3px rgba(0, 0, 0, .15);
}
.tool { flex-direction: column; gap: 6px; padding-bottom: 5px; }
.ico { width: 24px; height: 26px; }
.dn { width: 6px; height: 4px; vertical-align: middle; }
.sep { justify-self: center; width: 1px; height: 66px; background: #d0d0d0; }
.cut { justify-content: flex-start; align-items: flex-start; padding: 29px 0 0 9px; overflow: hidden; }
.scroll-next { height: 66px; border-radius: 4px; background: #eee; }

/* Workspace */
.workspace { display: flex; flex: 1; min-height: 0; }
.rail { display: flex; flex-direction: column; align-items: center; width: 57px; flex: none; }
.rail button { width: 24px; height: 40px; flex: none; }
.rail svg { width: 16px; height: 16px; fill: none; stroke: #3b3b3b; }
.rail .navy { stroke: #303a58; }
.left-rail { padding-top: 12px; border-right: 1px solid #d0d0d0; }
.right-rail { padding-top: 12px; border-left: 1px solid #d0d0d0; }
.right-rail button:first-child { height: 24px; }
.right-rail button:nth-child(5) { height: 32px; }
.canvas { display: flex; flex: 1; min-width: 0; padding-left: 23px; overflow: hidden; }
.page {
  flex: 1;
  padding: 0 0 0 219px;
  border: 1px solid #d0d0d0;
  border-width: 0 1px;
  background: #fff;
  color: #000;
  font-family: "Liberation Serif", serif;
}
.lead { margin: -12px 0 20px 48px; font-size: 24px; line-height: 28px; }
.result { width: 805px; border-collapse: collapse; table-layout: fixed; font-size: 28px; line-height: 35px; }
.result tr { height: 100px; }
.result th, .result td { padding: 5px 0 0 5px; border: 2px solid #000; text-align: left; vertical-align: top; font-weight: 400; }
.c1 { width: 207px; }
.c2 { width: 176px; }
.c3 { width: 169px; }
.c4 { width: 114px; }
.c5 { width: 137px; }
.scrollbar { display: flex; flex-direction: column; align-items: center; width: 40px; flex: none; padding: 9px 0 5px 24px; }
.arrow { border: 3px solid transparent; }
.up { border-top: 0; border-bottom: 5px solid #777; }
.dwn { border-bottom: 0; border-top: 5px solid #777; margin-top: auto; }
.thumb { width: 8px; height: 48px; margin-top: 294px; border-radius: 4px; background: #d2d2d2; }

/* Status bar */
.status { display: flex; align-items: center; height: 24px; flex: none; padding: 0 16px 2px 19px; border-top: 1px solid #d0d0d0; }
.nav-btn { gap: 4px; }
.pager { display: flex; align-items: center; gap: 22px; margin: 0 19px 0 20px; }
.pager svg { fill: none; stroke: #444; stroke-width: 1.2; }
.pager input { width: 110px; height: 20px; margin: 0 -7px; border: 1px solid #b4b4b4; border-radius: 4px; background: #fff; color: #222; font: inherit; text-align: center; }
.back { color: inherit; text-decoration: none; }
.view { display: flex; gap: 17px; margin-left: auto; }

/* Taskbar */
.taskbar { display: flex; height: 40px; flex: none; background: #101010; color: #fff; }
.start { width: 48px; }
.search { display: flex; align-items: center; width: 288px; padding-left: 12px; gap: 9px; border: 1px solid #5c5c5c; border-bottom: 0; background: #404040; overflow: hidden; }
.search input { flex: 1; min-width: 0; padding: 0; border: 0; outline: 0; background: none; color: #ddd; font: 14px/20px "Open Sans", sans-serif; }
.search input::placeholder { color: #d6d6d6; opacity: 1; }
.birds { width: 80px; height: 38px; }
.task-sys { display: flex; }
.task-sys button { width: 49px; }
.apps { display: flex; }
.apps button { width: 43px; height: 40px; padding-top: 2px; border-bottom: 2px solid transparent; }
.apps.narrow button { width: 42px; }
.apps svg { width: 24px; height: 24px; }
.apps .open { border-image: linear-gradient(90deg, transparent 4px, #b2b2ac 4px, #b2b2ac calc(100% - 4px), transparent calc(100% - 4px)) 2; }
.apps .current { background: #353535; }
.t-mw { font: 800 10px "Open Sans", sans-serif; fill: #fff; text-anchor: middle; }
.t-ij { font: 700 8px "Liberation Mono", monospace; fill: #fff; text-anchor: middle; }
.t-la { font: 14px "Liberation Serif", serif; fill: #23320a; text-anchor: middle; }
.t-la.big { font-size: 22px; }
.t-badge { font: 9px "Open Sans", sans-serif; fill: #fff; text-anchor: middle; }
.t-badge.three { font-size: 11px; }
.tray { display: flex; align-items: center; gap: 9px; margin-left: auto; padding-right: 15px; }
.weather { gap: 6px; margin-right: 6px; font-size: 14px; }
.lang { margin: 0 4px; }
.clock { flex-direction: column; line-height: 18px; margin-right: 8px; font-size: 11px; }

.watermark { position: absolute; z-index: 2; right: 57px; bottom: 73px; width: 236px; color: rgba(130, 130, 130, .6); font-size: 14px; line-height: 20px; white-space: nowrap; pointer-events: none; }
.watermark strong { display: block; font-size: 20px; font-weight: 400; line-height: 26px; }
```
